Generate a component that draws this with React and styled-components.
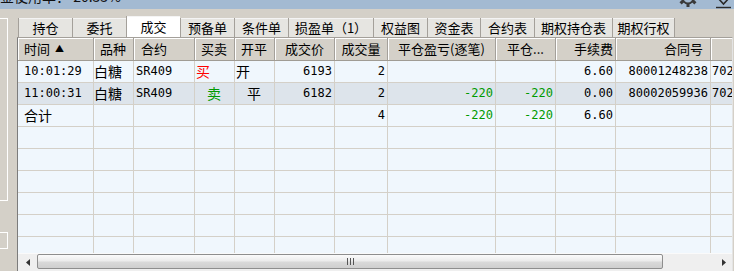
import React from 'react'
import styled, { createGlobalStyle } from 'styled-components'

const GlobalStyle = createGlobalStyle`
  html, body { margin: 0; padding: 0; }
  body {
    background: #d4d0c8;
    font-family: "Noto Sans CJK SC", sans-serif;
    overflow: hidden;
  }
`

const COLS = '76px 40px 61px 40px 40px 60px 53px 108px 60px 60px 95px 21px'

const Page = styled.div`
  width: 734px;
  height: 271px;
  display: flex;
  flex-direction: column;
  overflow: hidden;
  background: #d4d0c8;
`

const TopStrip = styled.div`
  height: 9px;
  flex: none;
  background: #a3bad2;
  display: flex;
  align-items: flex-start;
  overflow: hidden;
`

const StripText = styled.span`
  font-size: 14px;
  line-height: 14px;
  margin-top: -11px;
  color: #111;
  white-space: nowrap;
`

const StripIcons = styled.div`
  margin-left: auto;
  display: flex;
  align-items: flex-end;
  height: 9px;
  gap: 17px;
  padding-right: 2px;
`

const Main = styled.div`
  flex: 1;
  display: flex;
  min-height: 0;
`

const LeftPanel = styled.div`
  width: 17px;
  flex: none;
  padding-top: 9px;
  display: flex;
  flex-direction: column;
`

const PanelBox = styled.div`
  width: 8px;
  height: ${p => p.h}px;
  margin-top: ${p => p.mt || 0}px;
  box-sizing: border-box;
  border: 1px solid #fff;
  border-left: none;
`

const Content = styled.div`
  flex: 1;
  display: flex;
  flex-direction: column;
  min-width: 0;
`

const TabBar = styled.div`
  margin-top: 7px;
  height: 21px;
  flex: none;
  display: flex;
  align-items: flex-end;
  padding-left: 1px;
`

const Tab = styled.div`
  width: ${p => p.w}px;
  height: ${p => (p.active ? 21 : 19)}px;
  box-sizing: border-box;
  background: ${p => (p.active ? '#ffffff' : '#e6e5e1')};
  border-left: 1px solid #a4a09a;
  border-right: ${p => (p.last ? '1px solid #a4a09a' : 'none')};
  box-shadow: inset 0 1px #f4f4f4;
  font-size: 13px;
  line-height: ${p => (p.active ? 21 : 19)}px;
  text-align: center;
  color: #000;
  white-space: nowrap;
`

const Grid = styled.div`
  width: 716px;
  flex: 1;
  display: flex;
  flex-direction: column;
  box-sizing: border-box;
  border-left: 1px solid #7c7c7c;
  border-top: 1px solid #a4a09a;
  border-right: 1px solid #e4e4e4;
`

const HeaderRow = styled.div`
  display: grid;
  grid-template-columns: ${COLS};
  height: 23px;
  flex: none;
  box-sizing: border-box;
  background: #d4d0c8;
  box-shadow: inset 0 1px #fff;
  border-bottom: 1px solid #a09c94;
`

const HeaderCell = styled.div`
  box-sizing: border-box;
  border-right: ${p => (p.last ? 'none' : '1px solid #a4a09a')};
  box-shadow: inset 1px 1px #fff;
  font-size: 13px;
  line-height: 22px;
  text-align: ${p => p.align || 'center'};
  padding: 0 ${p => p.pr ?? 0}px 0 ${p => p.pl ?? 0}px;
  white-space: nowrap;
  overflow: hidden;
  color: #000;
`

const Sort = styled.span`
  font-size: 9px;
  margin-left: 5px;
  position: relative;
  top: -2px;
`

const Body = styled.div`
  height: 192px;
  flex: none;
  overflow: hidden;
  background: #f0f7fd;
`

const Row = styled.div`
  display: grid;
  grid-template-columns: ${COLS};
  height: 22px;
  box-sizing: border-box;
  border-bottom: 1px solid #d4d0c8;
  background: ${p => p.bg || '#f0f7fd'};
`

const Cell = styled.div`
  box-sizing: border-box;
  border-right: ${p => (p.last ? 'none' : '1px solid #d4d0c8')};
  padding: 0 ${p => p.pr ?? 2}px 0 ${p => p.pl ?? 2}px;
  text-align: ${p => p.align || 'left'};
  color: ${p => p.color || '#000'};
  font-family: ${p => (p.mono ? '"DejaVu Sans Mono", "Liberation Mono", monospace' : '"Noto Sans CJK SC", sans-serif')};
  font-size: ${p => (p.mono ? 12 : 14)}px;
  line-height: 21px;
  white-space: nowrap;
  overflow: hidden;
`

const ScrollBar = styled.div`
  height: 18px;
  flex: none;
  display: flex;
  align-items: stretch;
  background: #efefef;
  box-shadow: inset 0 1px #fafafa;
`

const ArrowBtn = styled.div`
  width: ${p => p.w}px;
  flex: none;
  display: flex;
  align-items: center;
  justify-content: ${p => (p.right ? 'flex-end' : 'center')};
  padding-right: ${p => (p.right ? 6 : 0)}px;
  box-sizing: border-box;
`

const Thumb = styled.div`
  width: 626px;
  flex: none;
  margin: 1px 0 2px;
  box-sizing: border-box;
  border: 1px solid #8e8e8e;
  border-radius: 2px;
  background: linear-gradient(#fbfbfb, #ececec 45%, #d9d9d9 55%, #cfcfcf);
  display: flex;
  align-items: center;
  justify-content: center;
`

const Grip = styled.div`
  width: 7px;
  height: 7px;
  background: repeating-linear-gradient(90deg, #555 0 1px, transparent 1px 3px);
`

const Track = styled.div`
  flex: 1;
`

const Gear = () => (
  <svg width="20" height="20" viewBox="0 0 20 20" style={{ marginBottom: 1 }}>
    <g fill="none" stroke="#3a3a3a" strokeWidth="2">
      <circle cx="10" cy="10" r="5.5" />
    </g>
    <g fill="#3a3a3a">
      <rect x="8.5" y="15" width="3" height="4" />
      <rect x="2.5" y="12" width="3" height="4" transform="rotate(45 4 14)" />
      <rect x="14.5" y="12" width="3" height="4" transform="rotate(-45 16 14)" />
    </g>
  </svg>
)

const Collapse = () => (
  <svg width="17" height="9" viewBox="0 0 17 9">
    <polyline points="2,-3 8.5,4 15,-3" fill="none" stroke="#2a2a2a" strokeWidth="1.6" />
    <line x1="1" y1="7.5" x2="16" y2="7.5" stroke="#2a2a2a" strokeWidth="1.4" />
  </svg>
)

const LeftArrow = () => (
  <svg width="4" height="7" viewBox="0 0 4 7"><polygon points="4,0 0,3.5 4,7" fill="#333" /></svg>
)

const RightArrow = () => (
  <svg width="4" height="7" viewBox="0 0 4 7"><polygon points="0,0 4,3.5 0,7" fill="#333" /></svg>
)

const tabs = [
  ['持仓', 54], ['委托', 54], ['成交', 54], ['预备单', 54], ['条件单', 54],
  ['损盈单（1）', 85], ['权益图', 54], ['资金表', 53], ['合约表', 54],
  ['期权持仓表', 78], ['期权行权', 63],
]

const headers = [
  { t: '时间', align: 'left', pl: 6, sort: true },
  { t: '品种', align: 'left', pl: 6 },
  { t: '合约', align: 'left', pl: 7 },
  { t: '买卖', align: 'left', pl: 6 },
  { t: '开平', align: 'left', pl: 6 },
  { t: '成交价' },
  { t: '成交量' },
  { t: '平仓盈亏(逐笔)' },
  { t: '平仓...' },
  { t: '手续费', align: 'right', pr: 2 },
  { t: '合同号', align: 'right', pr: 7 },
  { t: '' },
]

const GREEN = '#009a00'
const RED = '#ff0000'

const trades = [
  {
    time: '10:01:29', kind: '白糖', code: 'SR409', side: '买', sideColor: RED, sideAlign: 'left',
    oc: '开', ocAlign: 'left', price: '6193', qty: '2', pnl: '', pnl2: '', fee: '6.60',
    contract: '80001248238', extra: '702',
  },
  {
    time: '11:00:31', kind: '白糖', code: 'SR409', side: '卖', sideColor: GREEN, sideAlign: 'center',
    oc: '平', ocAlign: 'center', price: '6182', qty: '2', pnl: '-220', pnl2: '-220', fee: '0.00',
    contract: '80002059936', extra: '702', bg: '#dde4eb',
  },
]

const EmptyRow = () => (
  <Row>
    {headers.map((h, i) => <Cell key={i} last={i === headers.length - 1} />)}
  </Row>
)

export default function App() {
  return (
    <Page>
      <GlobalStyle />
      <TopStrip>
        <StripText>金使用率： 20.33%</StripText>
        <StripIcons>
          <Gear />
          <Collapse />
        </StripIcons>
      </TopStrip>
      <Main>
        <LeftPanel>
          <PanelBox h={183} />
          <PanelBox h={17} mt={31} />
        </LeftPanel>
        <Content>
          <TabBar>
            {tabs.map(([name, w], i) => (
              <Tab key={name} w={w} active={name === '成交'} last={i === tabs.length - 1}>{name}</Tab>
            ))}
          </TabBar>
          <Grid>
            <HeaderRow>
              {headers.map((h, i) => (
                <HeaderCell key={i} align={h.align} pl={h.pl} pr={h.pr} last={i === headers.length - 1}>
                  {h.t}{h.sort && <Sort>▲</Sort>}
                </HeaderCell>
              ))}
            </HeaderRow>
            <Body>
              {trades.map(r => (
                <Row key={r.time} bg={r.bg}>
                  <Cell mono pl={6}>{r.time}</Cell>
                  <Cell pl={0}>{r.kind}</Cell>
                  <Cell mono pl={2}>{r.code}</Cell>
                  <Cell pl={1} align={r.sideAlign} color={r.sideColor}>{r.side}</Cell>
                  <Cell pl={1} align={r.ocAlign}>{r.oc}</Cell>
                  <Cell mono align="right">{r.price}</Cell>
                  <Cell mono align="right">{r.qty}</Cell>
                  <Cell mono align="right" color={GREEN}>{r.pnl}</Cell>
                  <Cell mono align="right" color={GREEN}>{r.pnl2}</Cell>
                  <Cell mono align="right">{r.fee}</Cell>
                  <Cell mono align="right">{r.contract}</Cell>
                  <Cell mono last pl={1} pr={0}>{r.extra}</Cell>
                </Row>
              ))}
              <Row>
                <Cell pl={6}>合计</Cell>
                <Cell />
                <Cell />
                <Cell />
                <Cell />
                <Cell />
                <Cell mono align="right">4</Cell>
                <Cell mono align="right" color={GREEN}>-220</Cell>
                <Cell mono align="right" color={GREEN}>-220</Cell>
                <Cell mono align="right">6.60</Cell>
                <Cell />
                <Cell last />
              </Row>
              {Array.from({ length: 6 }).map((_, i) => <EmptyRow key={i} />)}
            </Body>
            <ScrollBar>
              <ArrowBtn w={19}><LeftArrow /></ArrowBtn>
              <Thumb><Grip /></Thumb>
              <Track />
              <ArrowBtn w={14} right><RightArrow /></ArrowBtn>
            </ScrollBar>
          </Grid>
        </Content>
      </Main>
    </Page>
  )
}
